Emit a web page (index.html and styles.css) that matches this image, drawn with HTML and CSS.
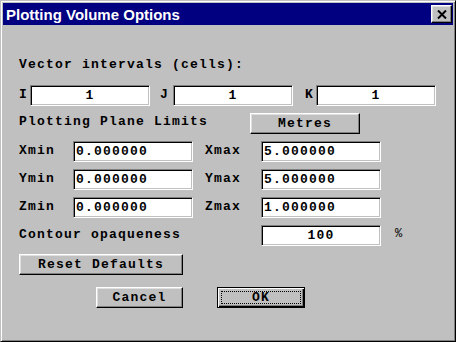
FILE: index.html
```html
<!DOCTYPE html>
<html lang="en">
<head>
  <meta charset="UTF-8">
  <meta name="viewport" content="width=device-width, initial-scale=1.0">
  <title>Plotting Volume Options</title>
  <link rel="stylesheet" href="styles.css">
</head>
<body>
  <div class="dialog">
    <!-- Title bar -->
    <div class="title-bar">
      <span class="title">Plotting Volume Options</span>
      <button class="close-btn" aria-label="Close">
        <svg width="10" height="9" viewBox="0 0 10 9">
          <path d="M1 0.5 L9 8.5 M9 0.5 L1 8.5" stroke="#000" stroke-width="2"/>
        </svg>
      </button>
    </div>

    <div class="content">
      <div class="heading">Vector intervals (cells):</div>

      <!-- I J K intervals -->
      <div class="ijk">
        <span class="axis axis-i">I</span>
        <input class="field center" type="text" value="1">
        <span class="axis axis-j">J</span>
        <input class="field center" type="text" value="1">
        <span class="axis axis-k">K</span>
        <input class="field center" type="text" value="1">
      </div>

      <div class="plane">
        <span class="plane-label">Plotting Plane Limits</span>
        <button class="btn metres">Metres</button>
      </div>

      <!-- Plane limits -->
      <div class="limits">
        <span class="lbl">Xmin</span>
        <input class="field" type="text" value="0.000000">
        <span class="lbl lbl-max">Xmax</span>
        <input class="field" type="text" value="5.000000">
        <span></span>

        <span class="lbl">Ymin</span>
        <input class="field" type="text" value="0.000000">
        <span class="lbl lbl-max">Ymax</span>
        <input class="field" type="text" value="5.000000">
        <span></span>

        <span class="lbl">Zmin</span>
        <input class="field" type="text" value="0.000000">
        <span class="lbl lbl-max">Zmax</span>
        <input class="field" type="text" value="1.000000">
        <span></span>

        <span class="lbl contour">Contour opaqueness</span>
        <input class="field center" type="text" value="100">
        <span class="percent">%</span>
      </div>

      <div class="reset-row">
        <button class="btn reset">Reset Defaults</button>
      </div>

      <div class="actions">
        <button class="btn cancel">Cancel</button>
        <button class="btn ok default"><span class="focus">OK</span></button>
      </div>
    </div>
  </div>
</body>
</html>
```

FILE: styles.css
```css
body {
  margin: 0;
  background-color: #c0c0c0;
}

.dialog {
  width: 456px;
  height: 342px;
  box-sizing: border-box;
  background-color: #c0c0c0;
  border: 1px solid;
  border-color: #c0c0c0 #000 #000 #c0c0c0;
  box-shadow: inset 1px 1px #fff, inset -1px -1px #808080;
  padding: 2px;
  font-family: "Liberation Mono", "Courier New", monospace;
  font-weight: bold;
  font-size: 13px;
  letter-spacing: 1.2px;
  color: #000;
}

/* Title bar */
.title-bar {
  height: 22px;
  background-color: #000080;
  display: flex;
  align-items: center;
  justify-content: space-between;
}

.title {
  color: #fff;
  font-family: "Liberation Sans", Arial, sans-serif;
  font-size: 15px;
  font-weight: bold;
  letter-spacing: 0;
  padding-left: 3px;
}

.close-btn {
  width: 21px;
  height: 18px;
  margin-right: 1px;
  padding: 0;
  background-color: #c0c0c0;
  border: 1px solid;
  border-color: #fff #000 #000 #fff;
  box-shadow: inset -1px -1px #808080, inset 1px 1px #dfdfdf;
  display: flex;
  align-items: center;
  justify-content: center;
}

.content {
  padding-left: 16px;
}

.heading {
  margin-top: 33px;
  height: 14px;
  line-height: 14px;
}

/* Inputs look sunken */
.field {
  width: 120px;
  height: 21px;
  box-sizing: border-box;
  margin: 0;
  padding: 0 2px;
  border: 1px solid;
  border-color: #808080 #fff #fff #808080;
  box-shadow: inset 1px 1px #000, inset -1px -1px #c0c0c0;
  background-color: #fff;
  font-family: inherit;
  font-weight: bold;
  font-size: 13px;
  letter-spacing: 1.2px;
  color: #000;
  outline: none;
}

.field.center {
  text-align: center;
}

.ijk {
  margin-top: 13px;
  display: flex;
  align-items: center;
  height: 21px;
}

.axis {
  padding-bottom: 3px;
}

.axis-i { width: 11px; }
.axis-j { width: 13px; margin-left: 10px; }
.axis-k { width: 11px; margin-left: 12px; }

.plane {
  margin-top: 7px;
  height: 21px;
  display: flex;
  align-items: center;
}

.plane-label {
  width: 231px;
  padding-bottom: 4px;
}

/* Raised buttons */
.btn {
  height: 21px;
  box-sizing: border-box;
  padding: 0;
  background-color: #c0c0c0;
  border: 1px solid;
  border-color: #fff #000 #000 #fff;
  box-shadow: inset -1px -1px #808080, inset 1px 1px #dfdfdf;
  font-family: inherit;
  font-weight: bold;
  font-size: 13px;
  letter-spacing: 1.2px;
  color: #000;
}

.metres { width: 110px; }

.limits {
  margin-top: 7px;
  display: grid;
  grid-template-columns: 54px 120px 68px 120px auto;
  grid-auto-rows: 21px;
  row-gap: 7px;
  align-items: center;
}

.lbl {
  padding-bottom: 2px;
}

.lbl-max {
  padding-left: 12px;
}

.contour {
  grid-column: 1 / 4;
}

.percent {
  align-self: start;
  padding-left: 14px;
  padding-top: 2px;
  font-weight: normal;
  font-size: 12px;
}

.reset-row {
  margin-top: 8px;
}

.reset { width: 164px; }

.actions {
  margin-top: 12px;
  display: flex;
  padding-left: 77px;
  gap: 34px;
}

.cancel { width: 87px; }

.ok { width: 88px; }

.btn.default {
  border-color: #000;
  box-shadow: inset 1px 1px #fff, inset -1px -1px #000, inset -2px -2px #808080;
  padding: 3px;
}

.focus {
  display: block;
  height: 100%;
  box-sizing: border-box;
  border: 1px dotted #000;
  line-height: 11px;
}
```
